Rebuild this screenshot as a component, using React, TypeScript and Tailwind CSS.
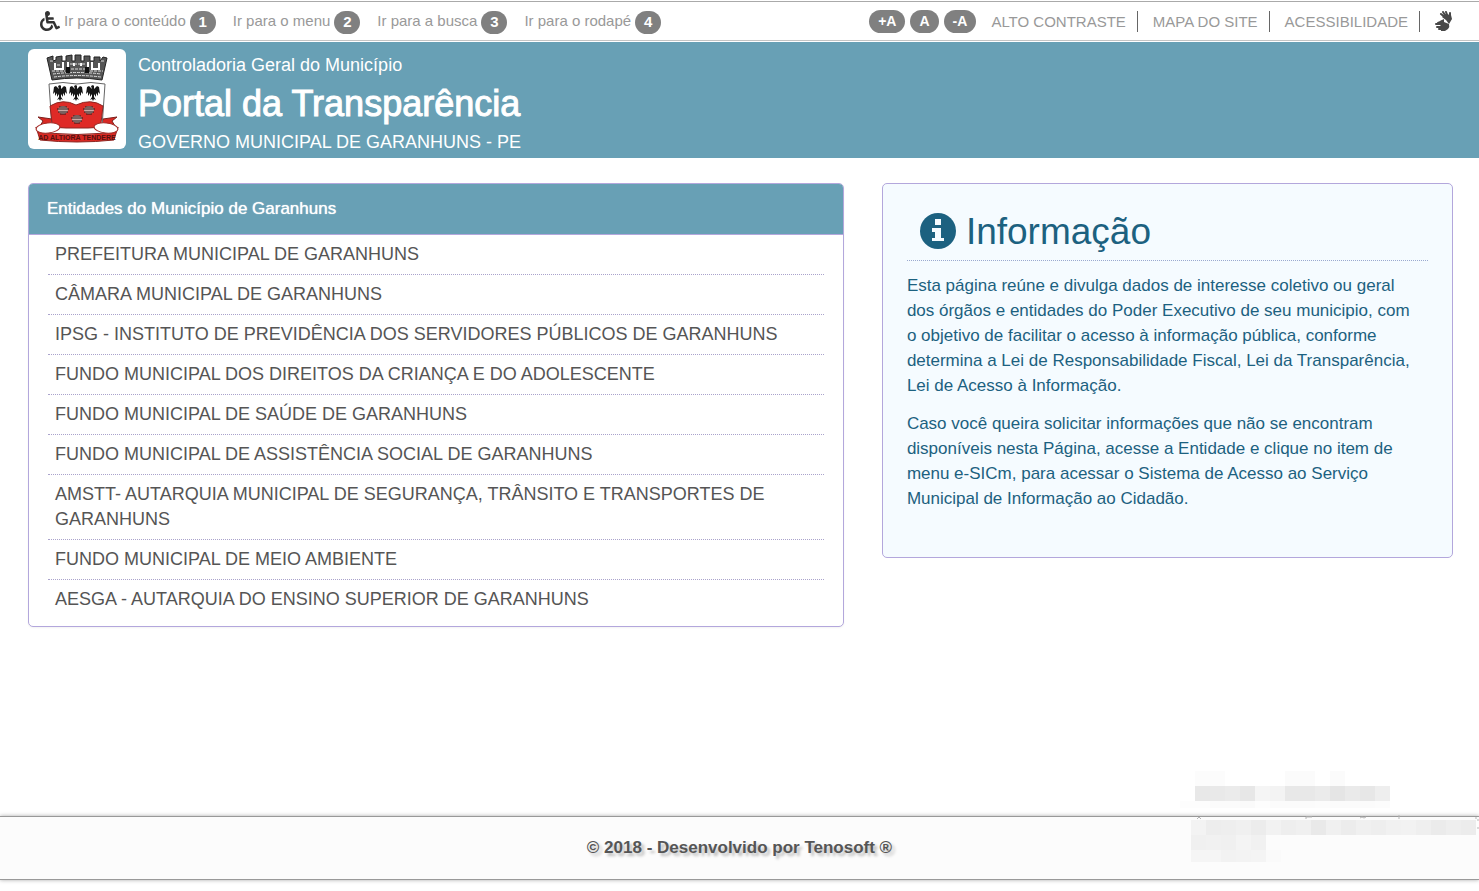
import { FaWheelchair } from "react-icons/fa";

const shortcuts = [
  { label: "Ir para o conteúdo", key: 1, href: "#conteudo" },
  { label: "Ir para o menu", key: 2, href: "#menu" },
  { label: "Ir para a busca", key: 3, href: "#busca" },
  { label: "Ir para o rodapé", key: 4, href: "#rodape" },
];

const fontButtons = [
  { text: "+A", label: "Aumentar fonte" },
  { text: "A", label: "Fonte padrão" },
  { text: "-A", label: "Diminuir fonte" },
];

const siteLinks = ["ALTO CONTRASTE", "MAPA DO SITE", "ACESSIBILIDADE"];

const entities = [
  "PREFEITURA MUNICIPAL DE GARANHUNS",
  "CÂMARA MUNICIPAL DE GARANHUNS",
  "IPSG - INSTITUTO DE PREVIDÊNCIA DOS SERVIDORES PÚBLICOS DE GARANHUNS",
  "FUNDO MUNICIPAL DOS DIREITOS DA CRIANÇA E DO ADOLESCENTE",
  "FUNDO MUNICIPAL DE SAÚDE DE GARANHUNS",
  "FUNDO MUNICIPAL DE ASSISTÊNCIA SOCIAL DE GARANHUNS",
  "AMSTT- AUTARQUIA MUNICIPAL DE SEGURANÇA, TRÂNSITO E TRANSPORTES DE GARANHUNS",
  "FUNDO MUNICIPAL DE MEIO AMBIENTE",
  "AESGA - AUTARQUIA DO ENSINO SUPERIOR DE GARANHUNS",
];

const HandsIcon = () => (
  <svg viewBox="0 0 18 20" className="h-5 w-[18px]" fill="none" stroke="#484848" strokeLinecap="round" aria-hidden="true">
    {/* Raised hand */}
    <path d="M12 8 L6 3 M12 7 L8 1 M13 6 L11 1 M15 7 V2" strokeWidth="2" />
    <path d="M7 6 L10 3 L16 4 L17 8 L14 13 L11 9 Z" fill="#484848" stroke="none" />
    {/* Flat hand */}
    <path d="M8 10 L3 12 M8 13 H1 M8 16 H2 M8 18 H4" strokeWidth="2" />
    <path d="M5 10 L9 8 L9 11 L14 13 Q15 16 13 18 L10 20 H6 Z" fill="#484848" stroke="none" />
  </svg>
);

const TopBar = () => (
  <nav className="mt-px flex h-10 items-center justify-between border-y border-t-[#aaa] border-b-[#c4c4c4] pr-[26px] pl-10 text-[15px] text-[#999]">
    <div className="flex items-center">
      <FaWheelchair className="mr-1 h-5 w-5 text-[#333]" />
      <ul className="flex gap-[17px]">
        {shortcuts.map((item) => (
          <li key={item.key}>
            <a href={item.href} className="flex items-center gap-1 whitespace-nowrap">
              {item.label}
              <span className="mt-0.5 flex h-[23px] w-[26px] items-center justify-center rounded-full bg-[#808080] font-bold text-white">
                {item.key}
              </span>
            </a>
          </li>
        ))}
      </ul>
    </div>
    <div className="flex items-center">
      <div className="mr-[15px] flex gap-[5px]">
        {fontButtons.map((item) => (
          <button
            key={item.text}
            type="button"
            aria-label={item.label}
            className="h-[23px] rounded-full bg-[#808080] px-[9px] text-sm font-bold text-white"
          >
            {item.text}
          </button>
        ))}
      </div>
      {siteLinks.map((link) => (
        <a key={link} href="#" className="mr-[15px] border-r border-[#666] pr-[11px] leading-[21px] whitespace-nowrap">
          {link}
        </a>
      ))}
      <a href="#libras" aria-label="Libras">
        <HandsIcon />
      </a>
    </div>
  </nav>
);

const Eagle = ({ x }: { x: number }) => (
  <g transform={`translate(${x} 36)`} fill="#161616">
    <path d="M0 0 L1 1 L1 4 L4 1 L6 2 L7 9 L5 7 L5 11 L3 8 L3 12 L1 9 L1 12 L3 15 L1 14 L0 16 L-1 14 L-3 15 L-1 12 L-1 9 L-3 12 L-3 8 L-5 11 L-5 7 L-7 9 L-6 2 L-4 1 L-1 4 L-2 1 Z" />
  </g>
);

const Shell = ({ x, y }: { x: number; y: number }) => (
  <g transform={`translate(${x} ${y})`}>
    <ellipse rx="5" ry="4" fill="#c9a9a5" />
    <path d="M-6 -1 H6 M-4 -3 H4 M-5 2 H5 M-3 4 H3" stroke="#2a1a1a" strokeWidth="1" />
  </g>
);

const Crest = () => (
  <svg viewBox="0 0 98 100" className="block h-[100px] w-[98px]" role="img" aria-label="Brasão de Garanhuns">
    {/* Mural crown */}
    <path
      d="M19 9 L25 7 V12 L28 11 V8 L34 7 V12 H38 V7 L44 6 V12 H47 V6 H53 V12 H56 V7 L62 7 V12 H66 V8 L72 8 V12 L75 8 L79 9 L74 31 Q49 27 24 31 Z"
      fill="#555"
      stroke="#222"
      strokeWidth="1"
    />
    <path d="M27 14 V20 H35 V13 M40 13 V21 M46 14 V17 M53 14 V17 M60 13 V21 M64 13 V20 H71 V14" stroke="#fff" strokeWidth="2" fill="none" />
    <path
      d="M22 12 H25 M29 16 H33 M42 15 H58 M73 12 H76 M24 22 H37 M43 20 H57 M62 22 H75 M25 25 Q49 22 73 25 M26 28 Q49 25 73 28"
      stroke="#ddd"
      strokeWidth="1"
      strokeDasharray="3 1"
      fill="none"
    />
    <path d="M38 24 V18 H42 V24 Z M57 24 V18 H61 V24 Z" fill="#111" />
    {/* Ribbon tails */}
    <path d="M10 68 L24 70 L26 77 H12 L15 72 Z M89 68 L75 70 L73 77 H87 L84 72 Z" fill="#d92823" stroke="#7c211d" strokeWidth="1" />
    {/* Shield */}
    <path d="M21 35 Q35 32 49 35 Q63 32 77 35 L74 78 H24 Z" fill="#fff" stroke="#666" strokeWidth="1" />
    <Eagle x={32} />
    <Eagle x={48} />
    <Eagle x={65} />
    <path d="M22 57 Q35 49 48 56 Q63 49 75 57 L73 74 Q72 79 60 79 H38 Q26 79 24 74 Z" fill="#df2a26" stroke="#8c2521" strokeWidth="1" />
    <Shell x={35} y={61} />
    <Shell x={61} y={61} />
    <Shell x={49} y={70} />
    {/* Motto ribbon */}
    <path d="M8 78 Q9 84 18 84 Q49 87 80 84 Q89 84 90 78 L86 91 Q49 95 12 91 Z" fill="#d92823" stroke="#8c2521" strokeWidth="1" />
    <ellipse cx="20" cy="79" rx="12" ry="5" fill="#fff" stroke="#a52b27" transform="rotate(-6 20 79)" />
    <ellipse cx="78" cy="79" rx="12" ry="5" fill="#fff" stroke="#a52b27" transform="rotate(6 78 79)" />
    <text x="49" y="91" textAnchor="middle" className="text-[7px] font-bold" fill="#54110f">
      AD ALTIORA TENDERE
    </text>
  </svg>
);

const Header = () => (
  <header className="mt-px flex items-start gap-3 bg-[#68a0b5] px-7 pt-[7px] pb-1.5 text-white">
    <a href="#" className="shrink-0 overflow-hidden rounded-md bg-white">
      <Crest />
    </a>
    <div className="pt-1.5 text-lg leading-5">
      <p>Controladoria Geral do Município</p>
      <h1 className="text-4xl leading-[57px] [-webkit-text-stroke:1px_#fff]">Portal da Transparência</h1>
      <p>GOVERNO MUNICIPAL DE GARANHUNS - PE</p>
    </div>
  </header>
);

const EntityList = () => (
  <section id="menu" className="overflow-hidden rounded-[5px] border border-[#b3a7dc] bg-white shadow-xs">
    <h2 className="border-b border-[#b3a7dc] bg-[#68a0b5] px-[18px] text-[17px] leading-[50px] text-white [text-shadow:0_0_1px_#fff]">
      Entidades do Município de Garanhuns
    </h2>
    <ul className="mx-[19px] mb-[7px] text-lg leading-[25px] text-[#555]">
      {entities.map((name) => (
        <li key={name} className="border-b border-dotted border-[#aaa3cc] px-[7px] py-[7px] last:border-b-0">
          <a href="#">{name}</a>
        </li>
      ))}
    </ul>
  </section>
);

const InfoPanel = () => (
  <section className="rounded-[5px] border border-[#b3a7dc] bg-[#f5fbff] px-6 pt-[23px] pb-[46px] text-[17px] leading-[25px] text-[#1c6180]">
    <h2 className="mb-3 flex items-center gap-2.5 border-b border-dotted border-[#9aa9cf] px-[13px] pb-1 text-[37px] leading-[49px]">
      <svg viewBox="0 0 36 36" className="mb-0.5 h-9 w-9" aria-hidden="true">
        <circle cx="18" cy="18" r="18" fill="#1c6180" />
        <path d="M15 6 H21 V12 H15 Z M12 15 H21 V25 H24 V28 H12 V25 H15 V19 H12 Z" fill="#f5fbff" />
      </svg>
      Informação
    </h2>
    <p className="mb-[13px] pr-2">
      Esta página reúne e divulga dados de interesse coletivo ou geral dos órgãos e entidades do Poder Executivo de seu
      municipio, com o objetivo de facilitar o acesso à informação pública, conforme determina a Lei de Responsabilidade
      Fiscal, Lei da Transparência, Lei de Acesso à Informação.
    </p>
    <p className="pr-2">
      Caso você queira solicitar informações que não se encontram disponíveis nesta Página, acesse a Entidade e clique no
      item de menu e-SICm, para acessar o Sistema de Acesso ao Serviço Municipal de Informação ao Cidadão.
    </p>
  </section>
);

// Rows of grey blocks: x and y of the first block, height, then one shade per 15px block
const mosaicRows = [
  { x: 15, y: 0, h: 15, shades: ["#fcfcfc", "#fcfcfc", "", "", "", "", "#fbfbfb", "#fbfbfb", "", "#fbfbfb"] },
  { x: 15, y: 15, h: 15, shades: ["#e8e8e8", "#e9e9e9", "#ebebeb", "#e7e7e7", "#f5f5f5", "#f3f3f3", "#e8e8e8", "#e8e8e8", "#ebebeb", "#e5e5e5", "#eaeaea", "#e7e7e7", "#eeeeee"] },
  { x: 0, y: 30, h: 7, shades: ["#fdfdfd", "#fdfdfd", "#fbfbfb", "#fbfbfb", "#fafafa", "#fdfdfd", "#fbfbfb", "#fbfbfb", "#fbfbfb", "#fcfcfc", "#fbfbfb", "#fbfbfb", "#fbfbfb", "#fcfcfc"] },
  { x: 11, y: 49, h: 15, shades: ["#f3f3f3", "#ededed", "#eeeeee", "#f0f0f0", "#ececec", "#f2f2f2", "#eeeeee", "#f0f0f0", "#e9e9e9", "#f0f0f0", "#ececec", "#f0f0f0", "#eeeeee", "#f1f1f1", "#f2f2f2", "#efefef", "#ebebeb", "#eeeeee", "#ececec"] },
  { x: 11, y: 64, h: 15, shades: ["#f0f0f0", "#f1f1f1", "#f0f0f0", "#f4f4f4", "#f1f1f1"] },
  { x: 11, y: 79, h: 12, shades: ["#f5f5f5", "#f5f5f5", "#f2f2f2", "#f3f3f3", "#f4f4f4", "#fafafa"] },
];

const Mosaic = () => (
  <svg width="299" height="92" className="pointer-events-none absolute right-0 bottom-[28px]" aria-hidden="true">
    {mosaicRows.map((row) =>
      row.shades.map((shade, i) =>
        shade ? <rect key={`${row.y}-${i}`} x={row.x + i * 15} y={row.y} width="15" height={row.h} fill={shade} /> : null,
      ),
    )}
    <path
      d="M17 48 L19 46 L21 48 M126 48 V46 H132 M180 47 L182 46 L184 47 L186 46 M219 48 V44 M296 48 V46 M297 49 H299 M297 57 H299"
      fill="none"
      stroke="#b5b5b5"
    />
  </svg>
);

const Footer = () => (
  <footer
    id="rodape"
    className="mb-[11px] border-y border-[#999] bg-[#fcfcfc] text-center text-[17px] leading-[62px] font-bold text-[#555] shadow-[0_0_4px_#aaa]"
  >
    <p className="[text-shadow:3px_3px_3px_#bbb]">© 2018 - Desenvolvido por Tenosoft ®</p>
  </footer>
);

export default function App() {
  return (
    <div className="relative flex min-h-screen flex-col bg-white font-['Liberation_Sans',Arial,sans-serif]">
      <TopBar />
      <Header />
      <main id="conteudo" className="grid flex-1 grid-cols-[10fr_7fr] items-start gap-[38px] pt-[25px] pr-[26px] pb-6 pl-7">
        <EntityList />
        <InfoPanel />
      </main>
      <Footer />
      <Mosaic />
    </div>
  );
}
